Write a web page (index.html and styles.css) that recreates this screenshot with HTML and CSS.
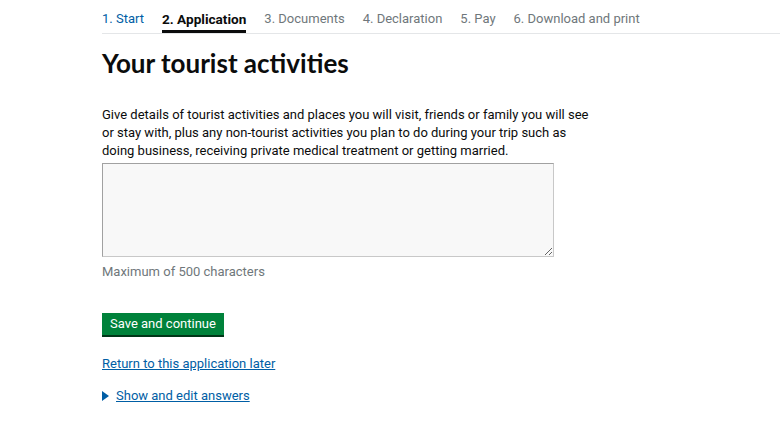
FILE: index.html
```html
<!DOCTYPE html>
<html>
<head>
<meta charset="utf-8">
<link rel="stylesheet" href="styles.css">
</head>
<body>
<div class="page">
  <nav class="steps">
    <span class="step done">1. Start</span>
    <span class="step active">2. Application</span>
    <span class="step">3. Documents</span>
    <span class="step">4. Declaration</span>
    <span class="step">5. Pay</span>
    <span class="step">6. Download and print</span>
  </nav>
  <main class="main">
    <h1 class="title">Your tourist activities</h1>
    <p class="hint">Give details of tourist activities and places you will visit, friends or family you will see or stay with, plus any non-tourist activities you plan to do during your trip such as doing business, receiving private medical treatment or getting married.</p>
    <textarea class="area"></textarea>
    <div class="max">Maximum of 500 characters</div>
    <button class="btn">Save and continue</button>
    <a class="link" href="#">Return to this application later</a>
    <div class="details"><span class="tri"></span><a class="link" href="#">Show and edit answers</a></div>
  </main>
</div>
</body>
</html>
```
FILE: styles.css
```css
* { box-sizing: border-box; }
body { margin: 0; font-family: Roboto, sans-serif; color: #0b0c0c; background: #fff; }
.page { padding-left: 102px; }
.steps { display: flex; gap: 18px; border-bottom: 1px solid #e4e6e8; height: 34px; align-items: flex-end; font-size: 13px; }
.step { color: #6f777b; padding-bottom: 5px; line-height: 18px; }
.step.done { color: #005ea5; }
.step.active { color: #0b0c0c; font-weight: 700; font-size: 13.6px; border-bottom: 3px solid #0b0c0c; padding-bottom: 2px; }
.main { width: 500px; display: flex; flex-direction: column; align-items: flex-start; }
.title { font-family: Lato, sans-serif; font-size: 26px; font-weight: 700; margin: 14px 0 0; line-height: 30px; }
.hint { font-size: 13px; line-height: 18px; margin: 28px 0 0; width: 490px; }
.area { width: 452px; height: 94px; margin-top: 3px; background: #f8f8f8; border: 1px solid #c8c8c8; border-top-color: #a1a1a1; border-left-color: #a1a1a1; resize: vertical; }
.max { font-size: 13px; color: #6f777b; margin-top: 6px; line-height: 18px; }
.btn { margin-top: 32px; background: #00823b; color: #fff; border: 0; box-shadow: 0 2px 0 #003618; font-family: inherit; font-size: 13px; height: 22px; padding: 0 8px; line-height: 22px; }
.link { color: #005ea5; font-size: 13px; text-decoration: underline; line-height: 18px; }
.main > .link { margin-top: 20px; }
.details { display: flex; align-items: center; gap: 7px; margin-top: 14px; }
.tri { width: 0; height: 0; border-left: 7px solid #005ea5; border-top: 5px solid transparent; border-bottom: 5px solid transparent; }
```
